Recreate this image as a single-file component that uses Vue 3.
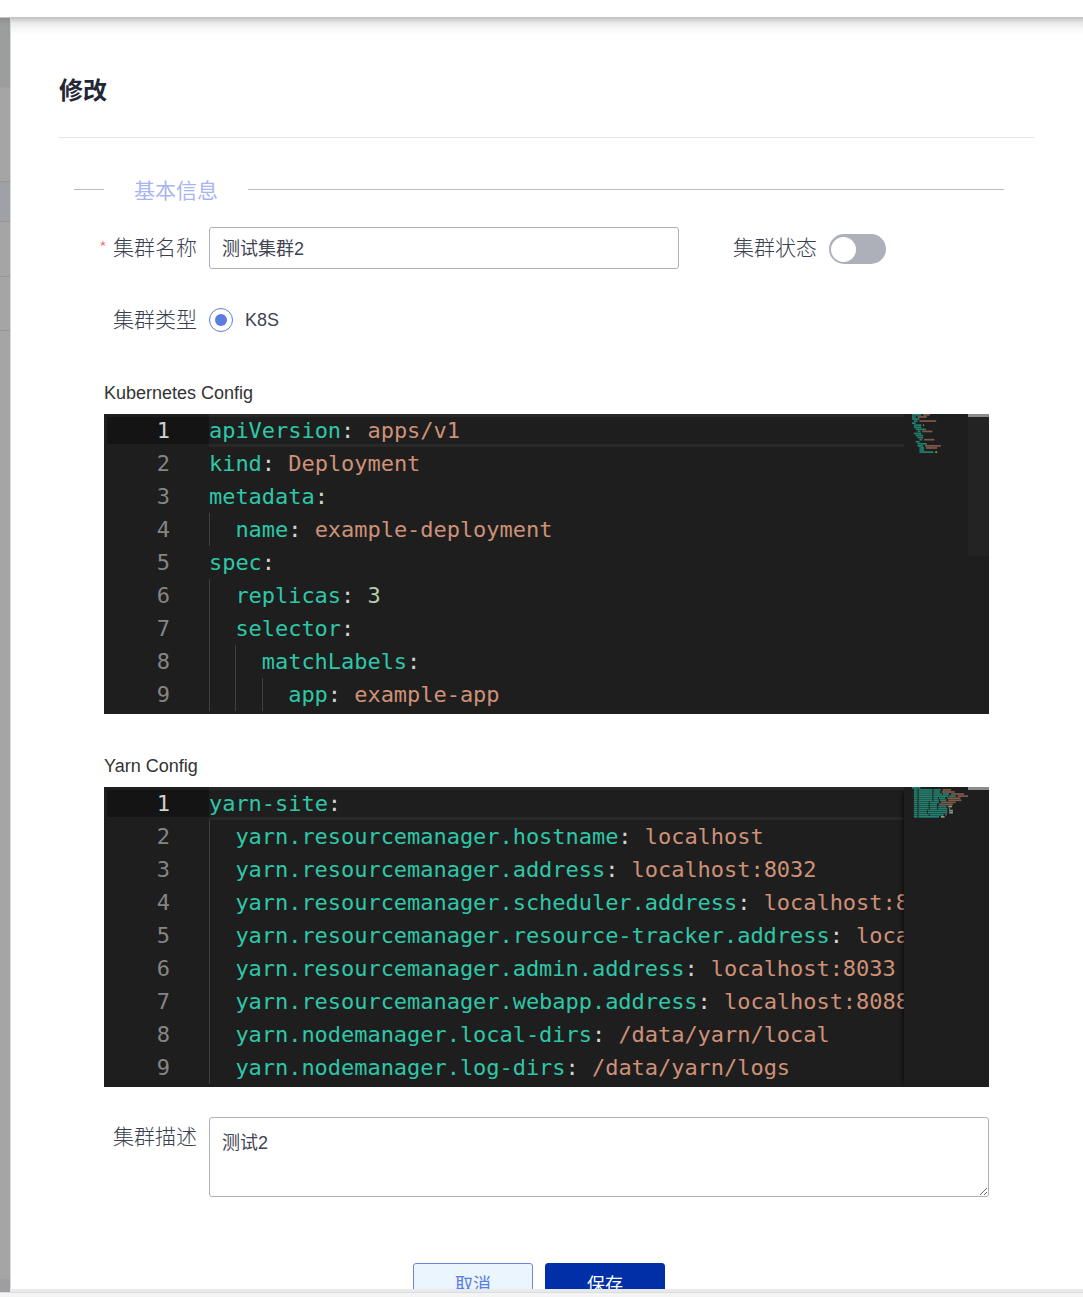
<script setup>
const k8s = [
  [0, 'apiVersion', 'apps/v1', 's'],
  [0, 'kind', 'Deployment', 's'],
  [0, 'metadata', '', ''],
  [1, 'name', 'example-deployment', 's'],
  [0, 'spec', '', ''],
  [1, 'replicas', '3', 'n'],
  [1, 'selector', '', ''],
  [2, 'matchLabels', '', ''],
  [3, 'app', 'example-app', 's'],
  [1, 'template', '', ''],
  [2, 'metadata', '', ''],
  [3, 'labels', '', ''],
  [4, 'app', 'example-app', 's'],
  [2, 'spec', '', ''],
  [3, 'containers', '', ''],
  [3, '- name', 'example-container', 's'],
  [4, 'image', 'nginx:1.14.2', 's'],
  [4, 'ports', '', ''],
  [4, '- containerPort', '80', 'n']
]
const yarn = [
  [0, 'yarn-site', '', ''],
  [1, 'yarn.resourcemanager.hostname', 'localhost', 's'],
  [1, 'yarn.resourcemanager.address', 'localhost:8032', 's'],
  [1, 'yarn.resourcemanager.scheduler.address', 'localhost:8030', 's'],
  [1, 'yarn.resourcemanager.resource-tracker.address', 'localhost:8031', 's'],
  [1, 'yarn.resourcemanager.admin.address', 'localhost:8033', 's'],
  [1, 'yarn.resourcemanager.webapp.address', 'localhost:8088', 's'],
  [1, 'yarn.nodemanager.local-dirs', '/data/yarn/local', 's'],
  [1, 'yarn.nodemanager.log-dirs', '/data/yarn/logs', 's'],
  [1, 'yarn.nodemanager.resource.memory-mb', '8192', 'n'],
  [1, 'yarn.nodemanager.resource.cpu-vcores', '4', 'n'],
  [1, 'yarn.scheduler.minimum-allocation-mb', '1024', 'n'],
  [1, 'yarn.scheduler.maximum-allocation-mb', '8192', 'n'],
  [1, 'yarn.nodemanager.vmem-pmem-ratio', '2', 'n'],
  [1, 'yarn.log-aggregation-enable', 'true', 'n']
]

const toRows = (src) =>
  src.slice(0, 9).map(([indent, key, val, type], i) => ({
    n: i + 1,
    guides: Array.from({ length: indent }),
    key,
    val,
    type
  }))

const toMini = (src, base) => {
  const out = []
  const cw = 0.93
  src.forEach(([indent, key, val, type], i) => {
    const y = i * 2.07
    const x0 = base + indent * 2 * cw
    let x = x0
    key.split('.').forEach((part) => {
      out.push({ x, y, w: part.length * cw, c: '#23806f' })
      x += (part.length + 1) * cw
    })
    if (val) {
      out.push({
        x: x0 + (key.length + 2) * cw,
        y,
        w: val.length * cw,
        c: type === 'n' ? '#8d9a80' : '#80594a'
      })
    }
  })
  return out
}

const editors = [
  { label: 'Kubernetes Config', rows: toRows(k8s), mini: toMini(k8s, 8), cls: 'short' },
  { label: 'Yarn Config', rows: toRows(yarn), mini: toMini(yarn, 8), cls: 'wide' }
]
const bands = ['b1', 'b2', 'b3', 'b4', 'b5', 'b6']
</script>

<template>
  <div class="root">
    <div class="topbar"></div>
    <div class="main">
      <div class="strip">
        <div v-for="b in bands" :key="b" :class="['band', b]"></div>
      </div>
      <div class="panel">
        <h2 class="title">修改</h2>
        <div class="section">
          <span class="sline lead"></span>
          <span class="stext">基本信息</span>
          <span class="sline rest"></span>
        </div>

        <div class="form-row first">
          <label class="label"><i class="star">*</i>集群名称</label>
          <input class="input" value="测试集群2" readonly />
          <label class="label status">集群状态</label>
          <span class="switch"><span class="knob"></span></span>
        </div>

        <div class="form-row second">
          <label class="label">集群类型</label>
          <span class="radio"><span class="dot"></span></span>
          <span class="radio-text">K8S</span>
        </div>

        <div v-for="ed in editors" :key="ed.label" :class="['block', ed.cls]">
          <div class="cfg-label">{{ ed.label }}</div>
          <div class="editor">
            <div class="gutter">
              <div v-for="r in ed.rows" :key="r.n" :class="['num', { active: r.n === 1 }]">{{ r.n }}</div>
            </div>
            <div class="view">
              <div v-for="r in ed.rows" :key="r.n" :class="['code', { current: r.n === 1 }]">
                <span v-for="(g, i) in r.guides" :key="i" class="guide"></span><span class="k">{{ r.key }}</span><span class="p">:</span><template v-if="r.val"><span class="p">&nbsp;</span><span :class="r.type === 'n' ? 'nv' : 's'">{{ r.val }}</span></template>
              </div>
            </div>
            <div class="minimap">
              <svg width="64" height="300" viewBox="0 0 64 300">
                <rect v-for="(m, i) in ed.mini" :key="i" :x="m.x" :y="m.y" :width="m.w" height="1.7" :fill="m.c" />
              </svg>
            </div>
            <div class="scroll"><div class="slider"></div></div>
          </div>
        </div>

        <div class="form-row desc">
          <label class="label">集群描述</label>
          <textarea class="area" readonly>测试2</textarea>
        </div>

        <div class="actions">
          <button class="btn ghost">取消</button>
          <button class="btn solid">保存</button>
        </div>
      </div>
    </div>
    <div class="footer"><div class="footer-line"></div></div>
  </div>
</template>

<style scoped>
.root {
  position: relative;
  width: 1083px;
  height: 1297px;
  overflow: hidden;
  background: #fff;
  font-family: "Noto Sans CJK SC", "Liberation Sans", sans-serif;
  color: #3a3f50;
}
.topbar {
  height: 17px;
  background: #fff;
  border-bottom: 1px solid #c4c4c6;
}
.main {
  display: flex;
  height: 1279px;
}
.strip {
  width: 10px;
  flex: none;
  display: flex;
  flex-direction: column;
  background: #a6a6a6;
}
.band { flex: none; border-bottom: 1px solid #979799; background: #a5a5a5; }
.b1 { height: 69px; background: linear-gradient(#8f8f8f, #9c9e9e 8px, #9c9e9e); border-bottom: 1px solid #a0a0a0; }
.b2 { height: 93px; }
.b3 { height: 39px; background: #a0a1a6; }
.b4 { height: 54px; }
.b5 { height: 53px; }
.b6 { flex: 1; border-bottom: 0; background: linear-gradient(#a5a5a5 948px, #9e9ea0 948px); }
.panel {
  flex: 1;
  min-width: 0;
  padding: 0 49px 0 48px;
  border-left: 1px solid #d9d9d9;
  background: linear-gradient(#c6c6c8 0, #e9e9ea 5px, #f8f8f8 11px, #fff 17px);
  overflow: hidden;
  box-sizing: border-box;
}
.title {
  margin: 0;
  padding: 53px 0 30px;
  font-size: 24px;
  line-height: 36px;
  font-weight: 700;
  color: #222736;
  border-bottom: 1px solid #e3e4e6;
}
.section {
  display: flex;
  align-items: center;
  margin: 35px 30px 0 15px;
  height: 32px;
}
.sline { height: 1px; background: #bcbdc3; }
.lead { width: 30px; flex: none; }
.rest { flex: 1; }
.stext {
  margin: 0 30px;
  font-size: 21px;
  line-height: 30px;
  padding-top: 1px;
  padding-bottom: 1px;
  color: #a7b5f2;
}
.form-row {
  display: flex;
  align-items: center;
}
.first { margin-top: 22px; height: 42px; }
.second { margin-top: 30px; height: 42px; }
.label {
  width: 150px;
  flex: none;
  padding: 0 12px 4px 0;
  box-sizing: border-box;
  font-size: 21px;
  font-weight: 300;
  line-height: 32px;
  text-align: right;
  color: #3a3f50;
}
.star {
  font-style: normal;
  color: #f56c6c;
  font-size: 18px;
  margin-right: 6px;
}
.input {
  width: 470px;
  height: 42px;
  flex: none;
  box-sizing: border-box;
  padding: 0 12px 2px;
  border: 1px solid #aeb0ba;
  border-radius: 3px;
  outline: none;
  font: 18px "Liberation Sans", "Noto Sans CJK SC", sans-serif;
  color: #3f4454;
}
.status { width: 96px; margin-left: 54px; }
.switch {
  width: 57px;
  height: 30px;
  margin-top: 2px;
  border-radius: 15px;
  background: #adb0b9;
  display: flex;
  align-items: center;
  padding-left: 2px;
  box-sizing: border-box;
}
.knob {
  width: 25px;
  height: 25px;
  border-radius: 50%;
  background: #fff;
}
.radio {
  width: 24px;
  height: 24px;
  box-sizing: border-box;
  border: 1px solid #5b7ce0;
  border-radius: 50%;
  display: flex;
  align-items: center;
  justify-content: center;
  flex: none;
}
.dot {
  width: 12px;
  height: 12px;
  border-radius: 50%;
  background: #5b7ce0;
}
.radio-text {
  margin-left: 12px;
  font: 18px "Liberation Sans", sans-serif;
  color: #3f4454;
}
.block { margin-left: 45px; width: 885px; }
.short { margin-top: 40px; }
.wide { margin-top: 40px; }
.cfg-label {
  height: 24px;
  margin-bottom: 9px;
  font: 18px/24px "Liberation Sans", sans-serif;
  color: #333;
}
.editor {
  display: flex;
  width: 885px;
  height: 300px;
  overflow: hidden;
  background: #1e1e1e;
  font-family: "DejaVu Sans Mono", "Liberation Mono", monospace;
  font-size: 22px;
  letter-spacing: -0.04px;
}
.gutter { width: 105px; flex: none; }
.num {
  height: 33px;
  line-height: 33px;
  padding-right: 39px;
  margin-left: 3px;
  text-align: right;
  color: #858585;
}
.num.active {
  color: #d0d0d0;
  background: #141414;
  border-top: 3px solid #1e1e1e;
  border-bottom: 3px solid #1e1e1e;
  line-height: 27px;
  height: 27px;
}
.view { width: 695px; flex: none; overflow: hidden; }
.code {
  height: 33px;
  line-height: 33px;
  white-space: pre;
  color: #d4d4d4;
}
.code.current {
  box-sizing: border-box;
  border-top: 3px solid #282828;
  border-bottom: 3px solid #282828;
  line-height: 27px;
}
.guide {
  display: inline-block;
  width: 26.4px;
  height: 33px;
  box-sizing: border-box;
  border-left: 1px solid #404040;
  vertical-align: top;
}
.k { color: #2ec7a8; }
.p { color: #d4d4d4; }
.s { color: #ce9178; }
.nv { color: #b5cea8; }
.minimap { width: 64px; flex: none; }
.minimap svg { display: block; }
.wide .minimap { box-shadow: -5px 0 5px -5px #000; }
.scroll { width: 21px; flex: none; }
.slider { height: 142px; background: #232323; border-top: 3px solid #8c8c8c; box-sizing: border-box; }
.wide .slider { background: transparent; }
.desc { margin-top: 30px; align-items: flex-start; }
.desc .label { padding: 2px 12px 0 0; }
.area {
  display: block;
  width: 780px;
  height: 80px;
  box-sizing: border-box;
  padding: 12px;
  border: 1px solid #aeb0ba;
  border-radius: 3px;
  outline: none;
  font: 18px/26px "Liberation Sans", "Noto Sans CJK SC", sans-serif;
  color: #3f4454;
}
.actions {
  display: flex;
  justify-content: center;
  gap: 12px;
  margin-top: 66px;
  width: 1006px;
  margin-left: -23px;
}
.btn {
  width: 120px;
  height: 40px;
  box-sizing: border-box;
  border-radius: 3px;
  font: 18px "Noto Sans CJK SC", sans-serif;
  padding: 0;
}
.ghost { background: #ebf5fe; border: 1px solid #6b86dd; color: #5b7ce0; }
.solid { background: #002fa7; border: 1px solid #002fa7; color: #fff; }
.footer {
  position: absolute;
  left: 10px;
  right: 0;
  bottom: 0;
  height: 8px;
  background: #e7e9ec;
}
.footer-line {
  position: absolute;
  left: -10px;
  right: 0;
  top: 3px;
  bottom: 0;
  background: #f5f4f4;
  border-top: 1px solid #dcdcdc;
}
</style>

<style>
html, body { margin: 0; background: #fff; overflow: hidden; }
</style>
